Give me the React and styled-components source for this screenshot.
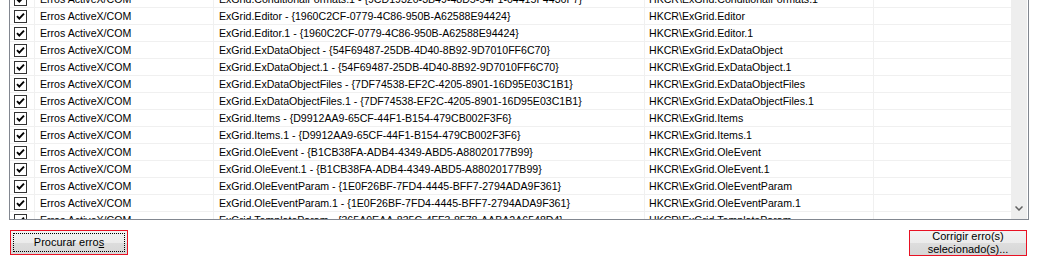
import React from "react";
import styled, { createGlobalStyle } from "styled-components";

const GlobalStyle = createGlobalStyle`
  html, body {
    margin: 0;
    padding: 0;
    background: #ffffff;
  }

  body {
    width: 1037px;
    height: 264px;
    overflow: hidden;
    font-family: "Liberation Sans", Arial, sans-serif;
    font-size: 10.6px;
    color: #000000;
  }
`;

const rows = [
  ["ExGrid.ConditionalFormats.1 - {9CD19320-3B49-48D5-94F1-04415F4436F7}", "HKCR\\ExGrid.ConditionalFormats.1"],
  ["ExGrid.Editor - {1960C2CF-0779-4C86-950B-A62588E94424}", "HKCR\\ExGrid.Editor"],
  ["ExGrid.Editor.1 - {1960C2CF-0779-4C86-950B-A62588E94424}", "HKCR\\ExGrid.Editor.1"],
  ["ExGrid.ExDataObject - {54F69487-25DB-4D40-8B92-9D7010FF6C70}", "HKCR\\ExGrid.ExDataObject"],
  ["ExGrid.ExDataObject.1 - {54F69487-25DB-4D40-8B92-9D7010FF6C70}", "HKCR\\ExGrid.ExDataObject.1"],
  ["ExGrid.ExDataObjectFiles - {7DF74538-EF2C-4205-8901-16D95E03C1B1}", "HKCR\\ExGrid.ExDataObjectFiles"],
  ["ExGrid.ExDataObjectFiles.1 - {7DF74538-EF2C-4205-8901-16D95E03C1B1}", "HKCR\\ExGrid.ExDataObjectFiles.1"],
  ["ExGrid.Items - {D9912AA9-65CF-44F1-B154-479CB002F3F6}", "HKCR\\ExGrid.Items"],
  ["ExGrid.Items.1 - {D9912AA9-65CF-44F1-B154-479CB002F3F6}", "HKCR\\ExGrid.Items.1"],
  ["ExGrid.OleEvent - {B1CB38FA-ADB4-4349-ABD5-A88020177B99}", "HKCR\\ExGrid.OleEvent"],
  ["ExGrid.OleEvent.1 - {B1CB38FA-ADB4-4349-ABD5-A88020177B99}", "HKCR\\ExGrid.OleEvent.1"],
  ["ExGrid.OleEventParam - {1E0F26BF-7FD4-4445-BFF7-2794ADA9F361}", "HKCR\\ExGrid.OleEventParam"],
  ["ExGrid.OleEventParam.1 - {1E0F26BF-7FD4-4445-BFF7-2794ADA9F361}", "HKCR\\ExGrid.OleEventParam.1"],
  ["ExGrid.TemplateParam - {365A9EAA-835C-4FF3-8578-AABA2A6548D4}", "HKCR\\ExGrid.TemplateParam"],
];

const ListBox = styled.div`
  display: flex;
  width: 1018px;
  height: 219px;
  margin-left: 9px;
  border-left: 1px solid #828790;
  border-right: 1px solid #828790;
  border-bottom: 1px solid #828790;
  background: #ffffff;
`;

const Viewport = styled.div`
  flex: 1;
  overflow: hidden;
`;

const Rows = styled.div`
  margin-top: -9px;
`;

const Row = styled.div`
  display: grid;
  grid-template-columns: 25px 179px 431px 229px 1fr;
  height: 17px;
  border-bottom: 1px solid #f0f0f0;
  box-sizing: border-box;
`;

const Cell = styled.div`
  display: flex;
  align-items: center;
  padding-left: ${(p) => p.$pad || 5}px;
  border-right: ${(p) => (p.$last ? "none" : "1px solid #f0f0f0")};
  white-space: nowrap;
  overflow: hidden;
  line-height: 16px;
`;

const CheckBox = styled.span`
  display: flex;
  align-items: center;
  justify-content: center;
  width: 11px;
  height: 11px;
  border: 1px solid #333333;
  background: #ffffff;
`;

const ScrollBar = styled.div`
  display: flex;
  flex-direction: column;
  justify-content: flex-end;
  width: 16px;
  margin-right: 1px;
  background: #eeeeee;
`;

const ArrowButton = styled.div`
  display: flex;
  align-items: center;
  justify-content: center;
  height: 17px;
  margin-bottom: 2px;
`;

const Footer = styled.div`
  display: flex;
  justify-content: space-between;
  padding: 10px 10px 0 10px;
`;

const Button = styled.button`
  display: flex;
  align-items: center;
  justify-content: center;
  width: 118px;
  height: ${(p) => p.$h}px;
  padding: 0;
  border: 1px solid #e81123;
  background: linear-gradient(#f2f2f2 0%, #ebebeb 50%, #dddddd 51%, #d6d6d6 100%);
  font-family: "Liberation Sans", Arial, sans-serif;
  font-size: 11px;
  line-height: 13px;
  color: #000000;
  text-align: center;
  box-sizing: border-box;
  overflow: visible;
`;

const FocusRing = styled.span`
  display: flex;
  align-items: center;
  justify-content: center;
  align-self: stretch;
  flex: 1;
  margin: 2px;
  border: 1px dotted #000000;
`;

const Label = styled.span`
  display: block;
`;

function Check() {
  return (
    <CheckBox>
      <svg width="9" height="9" viewBox="0 0 9 9">
        <path d="M1 4.2 L3.3 6.6 L8 1.6" fill="none" stroke="#000" strokeWidth="1.9" />
      </svg>
    </CheckBox>
  );
}

export default function App() {
  return (
    <>
      <GlobalStyle />
      <ListBox>
        <Viewport>
          <Rows>
            {rows.map(([name, key]) => (
              <Row key={name}>
                <Cell $pad={4}>
                  <Check />
                </Cell>
                <Cell>Erros ActiveX/COM</Cell>
                <Cell>{name}</Cell>
                <Cell $pad={4}>{key}</Cell>
                <Cell $last />
              </Row>
            ))}
          </Rows>
        </Viewport>
        <ScrollBar>
          <ArrowButton>
            <svg width="8" height="5" viewBox="0 0 8 5">
              <path d="M0.5 0.5 L4 4 L7.5 0.5" fill="none" stroke="#606060" strokeWidth="1.5" />
            </svg>
          </ArrowButton>
        </ScrollBar>
      </ListBox>
      <Footer>
        <Button $h={25}>
          <FocusRing>
            <Label>
              Procurar erro<u>s</u>
            </Label>
          </FocusRing>
        </Button>
        <Button $h={26}>
          <Label>
            Corrigir erro(s)
            <br />
            selecionado(s)...
          </Label>
        </Button>
      </Footer>
    </>
  );
}
